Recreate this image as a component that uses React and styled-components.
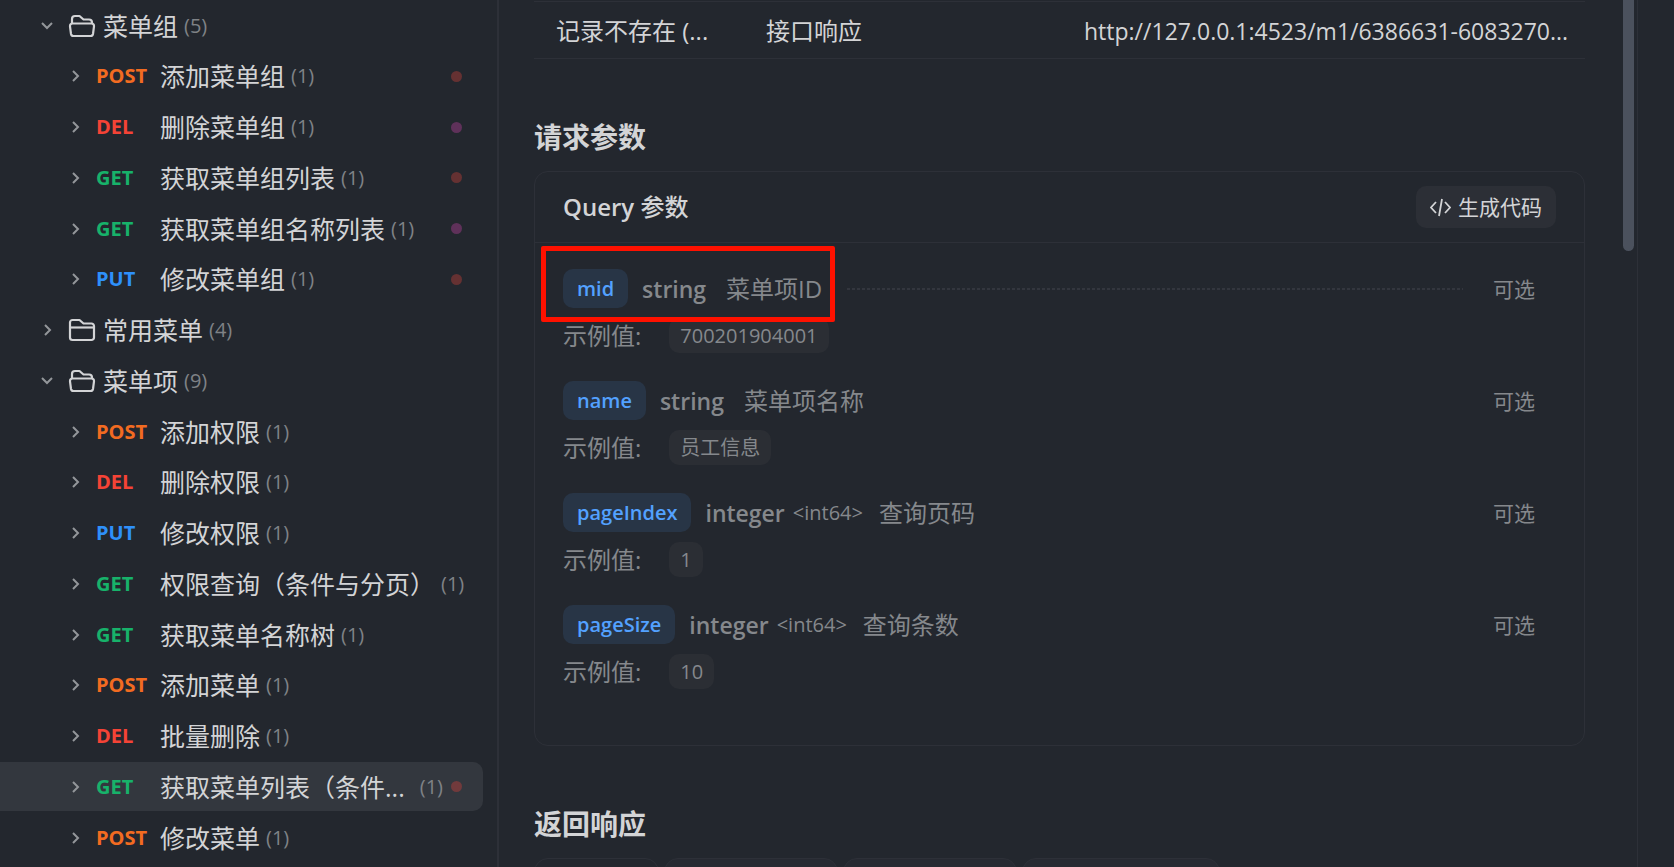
import React from "react";
import styled, { createGlobalStyle } from "styled-components";

const GlobalStyle = createGlobalStyle`
  * {
    box-sizing: border-box;
  }
  body {
    margin: 0;
    background: #23272e;
    color: #d3d4d6;
    font-family: "Open Sans", "Noto Sans CJK SC", sans-serif;
    font-size: 24px;
    line-height: 32px;
    overflow: hidden;
  }
  button {
    font: inherit;
    color: inherit;
    border: 0;
    background: none;
    padding: 0;
    cursor: pointer;
  }
`;

const METHOD_COLORS = {
  POST: "#f26b21",
  DEL: "#f44336",
  GET: "#17b26a",
  PUT: "#2e90fa",
};

const DOT_COLORS = {
  red: "#653132",
  purple: "#5f315a",
};

const Page = styled.div`
  display: grid;
  grid-template-columns: 499px minmax(0, 1fr) 37px;
  grid-template-rows: minmax(0, 1fr);
  height: 100vh;
`;

const Sidebar = styled.nav`
  display: flex;
  flex-direction: column;
  justify-content: space-between;
  padding: 1px 14px 5px 0;
  border-right: 2px solid #2d3038;
`;

const TreeRow = styled.button`
  display: flex;
  align-items: center;
  width: 100%;
  height: 49px;
  padding: 0 21px 0 ${(p) => (p.$nested ? 68 : 40)}px;
  border-radius: 0 10px 10px 0;
  text-align: left;
  white-space: nowrap;
  ${(p) => p.$active && "background: #33373e;"}
`;

const Arrow = styled.svg`
  flex: none;
  width: 14px;
  height: 14px;
  fill: none;
  stroke: #93969a;
  stroke-width: 2;
`;

const FolderIcon = styled.svg`
  flex: none;
  width: 28px;
  height: 24px;
  margin: 0 7px 0 14px;
  fill: none;
  stroke: #d3d4d6;
  stroke-width: 2.2;
  stroke-linejoin: round;
`;

const Method = styled.span`
  flex: none;
  width: 64px;
  margin-left: 14px;
  color: ${(p) => METHOD_COLORS[p.$method]};
  font-size: 20px;
  font-weight: 700;
`;

const Name = styled.span`
  font-size: 25px;
  ${(p) => p.$fill && "flex: 1;"}
`;

const Count = styled.span`
  margin-left: 6px;
  color: #7f8286;
  font-size: 20px;
`;

const Dot = styled.span`
  flex: none;
  width: 11px;
  height: 11px;
  margin-left: ${(p) => (p.$active ? "8px" : "auto")};
  border-radius: 50%;
  background: ${(p) => (p.$active ? "#713a3c" : DOT_COLORS[p.$color])};
`;

const Content = styled.div`
  display: grid;
  grid-template-columns: minmax(0, 1fr) 11px;
  column-gap: 38px;
  padding: 0 3px 0 35px;
  overflow: hidden;
`;

const Doc = styled.main`
  padding-top: 1px;
`;

const CaseTable = styled.table`
  width: 100%;
  table-layout: fixed;
  border-collapse: collapse;
  border-top: 1px solid #2d3038;
  border-bottom: 1px solid #2d3038;

  td {
    height: 57px;
    padding: 2px 0 0 22px;
    white-space: nowrap;
  }
  td:nth-child(1) {
    width: 210px;
  }
  td:nth-child(2) {
    width: 318px;
  }
`;

const Url = styled.td`
  font-size: 23px;
`;

const SectionTitle = styled.h2`
  margin: 58px 0 14px;
  font-size: 28px;
  line-height: 40px;
  font-weight: 700;
`;

const Card = styled.section`
  border: 1px solid #2d3038;
  border-radius: 14px;
`;

const CardHeader = styled.header`
  display: flex;
  align-items: center;
  justify-content: space-between;
  height: 71px;
  padding: 0 28px;
  border-bottom: 1px solid #2d3038;
`;

const CardTitle = styled.h3`
  margin: 0;
  font-size: 24px;
  font-weight: 500;

  span {
    font-weight: 600;
  }
`;

const CodeButton = styled.button`
  display: flex;
  align-items: center;
  gap: 7px;
  height: 42px;
  padding: 0 14px;
  border-radius: 10px;
  background: #2c2f36;
  font-size: 21px;

  svg {
    width: 21px;
    height: 21px;
    fill: none;
    stroke: #d3d4d6;
    stroke-width: 1.8;
  }
`;

const ParamList = styled.div`
  display: flex;
  flex-direction: column;
  gap: 28px;
  padding: 26px 28px 56px;
  color: #85888c;
`;

const Param = styled.div`
  display: flex;
  flex-direction: column;
  gap: 10px;
`;

const ParamLine = styled.div`
  display: flex;
  align-items: center;
  height: ${(p) => p.$height}px;
  white-space: nowrap;
`;

const ParamInfo = styled.div`
  position: relative;
  display: flex;
  align-items: center;
`;

const Highlight = styled.div`
  position: absolute;
  z-index: 1;
  inset: -23px -13px -14px -22px;
  border: 5px solid #ff1100;
  border-radius: 2px;
`;

const ParamName = styled.code`
  padding: 0 14px;
  margin-right: 14px;
  border-radius: 10px;
  background: #283546;
  color: #53a1ff;
  font-family: inherit;
  font-size: 20px;
  line-height: 39px;
  font-weight: 600;
`;

const ParamType = styled.span`
  font-size: 23px;
  font-weight: 600;
`;

const Format = styled.span`
  margin-left: 8px;
  font-size: 20px;
`;

const Description = styled.span`
  margin-left: ${(p) => (p.$afterFormat ? 16 : 20)}px;
`;

const Leader = styled.span`
  flex: 1;
  height: 2px;
  margin: 0 30px 0 25px;
  background: repeating-linear-gradient(
    to right,
    #33363e 0 3px,
    transparent 3px 5px
  );
`;

const Optional = styled.span`
  margin: 0 21px 0 ${(p) => (p.$push ? "auto" : 0)};
  font-size: 21px;
`;

const Example = styled.span`
  margin-left: 28px;
  padding: 0 11px;
  border-radius: 10px;
  background: #2b2e34;
  font-size: 20px;
  line-height: 35px;
`;

const Tabs = styled.div`
  display: flex;
  gap: 5px;
`;

const Tab = styled.div`
  width: ${(p) => p.$width}px;
  height: 56px;
  border: 1px solid #2d3038;
  border-radius: 14px 14px 0 0;
  background: ${(p) => (p.$active ? "transparent" : "#272a32")};
`;

const ScrollThumb = styled.div`
  height: 251px;
  border-radius: 0 0 6px 6px;
  background: #4b515d;
`;

const RightRail = styled.aside`
  border-left: 1px solid #2d3038;
`;

const tree = [
  { folder: true, open: true, name: "菜单组", count: 5 },
  { method: "POST", name: "添加菜单组", count: 1, dot: "red" },
  { method: "DEL", name: "删除菜单组", count: 1, dot: "purple" },
  { method: "GET", name: "获取菜单组列表", count: 1, dot: "red" },
  { method: "GET", name: "获取菜单组名称列表", count: 1, dot: "purple" },
  { method: "PUT", name: "修改菜单组", count: 1, dot: "red" },
  { folder: true, open: false, name: "常用菜单", count: 4 },
  { folder: true, open: true, name: "菜单项", count: 9 },
  { method: "POST", name: "添加权限", count: 1 },
  { method: "DEL", name: "删除权限", count: 1 },
  { method: "PUT", name: "修改权限", count: 1 },
  { method: "GET", name: "权限查询（条件与分页）", count: 1 },
  { method: "GET", name: "获取菜单名称树", count: 1 },
  { method: "POST", name: "添加菜单", count: 1 },
  { method: "DEL", name: "批量删除", count: 1 },
  { method: "GET", name: "获取菜单列表（条件...", count: 1, dot: "red", active: true },
  { method: "POST", name: "修改菜单", count: 1 },
];

const params = [
  { name: "mid", type: "string", desc: "菜单项ID", example: "700201904001", marked: true },
  { name: "name", type: "string", desc: "菜单项名称", example: "员工信息" },
  { name: "pageIndex", type: "integer", format: "<int64>", desc: "查询页码", example: "1" },
  { name: "pageSize", type: "integer", format: "<int64>", desc: "查询条数", example: "10" },
];

const Folder = ({ open }) => (
  <FolderIcon viewBox="0 0 28 24">
    {open ? (
      <>
        <path d="M4 10V5a3 3 0 0 1 3-3h4.500l4 3.500H21a3 3 0 0 1 3 3V10" />
        <path d="M4.500 9.500h19a2.500 2.500 0 0 1 2.500 2.800l-1 7.700a2.500 2.500 0 0 1-2.500 2H5.500a2.500 2.500 0 0 1-2.500-2l-1-7.700A2.500 2.500 0 0 1 4.500 9.500z" />
      </>
    ) : (
      <>
        <path d="M2 19.500v-15A2.500 2.500 0 0 1 4.500 2h7l4 3.500h8A2.500 2.500 0 0 1 26 8v11.500a2.500 2.500 0 0 1-2.500 2.500h-19A2.500 2.500 0 0 1 2 19.500z" />
        <path d="M2 9.500h24" />
      </>
    )}
  </FolderIcon>
);

const TreeItem = ({ item }) => (
  <TreeRow $nested={!item.folder} $active={item.active}>
    <Arrow viewBox="0 0 14 14">
      <path d={item.open ? "M2 4l5 5 5-5" : "M5 2l5 5-5 5"} />
    </Arrow>
    {item.folder ? (
      <Folder open={item.open} />
    ) : (
      <Method $method={item.method}>{item.method}</Method>
    )}
    <Name $fill={item.active}>{item.name}</Name>
    <Count>({item.count})</Count>
    {item.dot && <Dot $color={item.dot} $active={item.active} />}
  </TreeRow>
);

const ParamItem = ({ param }) => (
  <Param>
    <ParamLine $height={39}>
      <ParamInfo>
        <ParamName>{param.name}</ParamName>
        <ParamType>{param.type}</ParamType>
        {param.format && <Format>{param.format}</Format>}
        <Description $afterFormat={!!param.format}>{param.desc}</Description>
        {param.marked && <Highlight />}
      </ParamInfo>
      {param.marked && <Leader />}
      <Optional $push={!param.marked}>可选</Optional>
    </ParamLine>
    <ParamLine $height={35}>
      <span>示例值:</span>
      <Example>{param.example}</Example>
    </ParamLine>
  </Param>
);

const App = () => (
  <>
    <GlobalStyle />
    <Page>
      <Sidebar>
        {tree.map((item, i) => (
          <TreeItem key={i} item={item} />
        ))}
      </Sidebar>
      <Content>
        <Doc>
          <CaseTable>
            <tbody>
              <tr>
                <td>记录不存在 (...</td>
                <td>接口响应</td>
                <Url>http://127.0.0.1:4523/m1/6386631-6083270...</Url>
              </tr>
            </tbody>
          </CaseTable>
          <SectionTitle>请求参数</SectionTitle>
          <Card>
            <CardHeader>
              <CardTitle>
                <span>Query</span> 参数
              </CardTitle>
              <CodeButton>
                <svg viewBox="0 0 21 21">
                  <path d="M6 5l-5 5.500L6 16M15 5l5 5.500-5 5.500M12 2L9 19" />
                </svg>
                生成代码
              </CodeButton>
            </CardHeader>
            <ParamList>
              {params.map((param) => (
                <ParamItem key={param.name} param={param} />
              ))}
            </ParamList>
          </Card>
          <SectionTitle>返回响应</SectionTitle>
          <Tabs>
            <Tab $width={125} $active />
            <Tab $width={174} />
            <Tab $width={174} />
            <Tab $width={198} />
          </Tabs>
        </Doc>
        <ScrollThumb />
      </Content>
      <RightRail />
    </Page>
  </>
);

export default App;
